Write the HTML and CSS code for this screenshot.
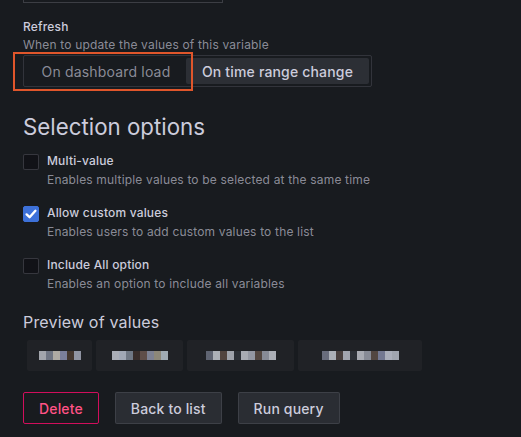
FILE: index.html
```html
<!DOCTYPE html>
<html>
<head>
<meta charset="utf-8">
<link rel="stylesheet" href="styles.css">
</head>
<body>
<div class="page">
  <div class="prev-input"></div>
  <div class="field">
    <div class="label">Refresh</div>
    <div class="desc">When to update the values of this variable</div>
    <div class="radio-wrap">
      <div class="radio-group">
        <div class="opt">On dashboard load</div>
        <div class="opt active">On time range change</div>
      </div>
      <div class="highlight"></div>
    </div>
  </div>

  <h3 class="section-title">Selection options</h3>

  <div class="check-row">
    <span class="cb"></span>
    <div class="check-text">
      <div class="check-label">Multi-value</div>
      <div class="check-desc">Enables multiple values to be selected at the same time</div>
    </div>
  </div>
  <div class="check-row">
    <span class="cb checked"><svg viewBox="0 0 16 16" width="16" height="16"><path d="M3.6 8.4 L6.6 11.2 L12.4 4.8" fill="none" stroke="#fff" stroke-width="2.4" stroke-linecap="round" stroke-linejoin="round"/></svg></span>
    <div class="check-text">
      <div class="check-label">Allow custom values</div>
      <div class="check-desc">Enables users to add custom values to the list</div>
    </div>
  </div>
  <div class="check-row">
    <span class="cb"></span>
    <div class="check-text">
      <div class="check-label">Include All option</div>
      <div class="check-desc">Enables an option to include all variables</div>
    </div>
  </div>

  <h4 class="preview-title">Preview of values</h4>
  <div class="chips">
    <div class="chip c1"><span class="blur"><i style="background:#b9bcc4"></i><i style="background:#7d8494"></i><i style="background:#c9c3bb"></i><i style="background:#8c90b0"></i><i style="background:#4a3a30"></i><i style="background:#a4a9b8"></i></span></div>
    <div class="chip c2"><span class="blur"><i style="background:#c2c6d0"></i><i style="background:#b8c0d0"></i><i style="background:#7f8796"></i><i style="background:#3d2f2c"></i><i style="background:#6b5650"></i><i style="background:#8e92a6"></i><i style="background:#a09a88"></i><i style="background:#b7c3cc"></i></span></div>
    <div class="chip c3"><span class="blur"><i style="background:#6b7080"></i><i style="background:#c6cad2"></i><i style="background:#5a4a44"></i><i style="background:#b6bac4"></i><i style="background:#2f333b"></i><i style="background:#c0c4cc"></i><i style="background:#a8acb8"></i><i style="background:#5b4d45"></i><i style="background:#9a9eaa"></i><i style="background:#c4c8d0"></i></span></div>
    <div class="chip c4"><span class="blur"><i style="background:#767b8c"></i><i style="background:#c4c8d0"></i><i style="background:#4e4340"></i><i style="background:#b9bdc6"></i><i style="background:#2f333b"></i><i style="background:#c0c4cc"></i><i style="background:#9a9eaa"></i><i style="background:#5b4d45"></i><i style="background:#8288a4"></i><i style="background:#c3c7d4"></i><i style="background:#b7bcc8"></i></span></div>
  </div>

  <div class="actions">
    <button class="btn danger">Delete</button>
    <button class="btn">Back to list</button>
    <button class="btn">Run query</button>
  </div>
</div>
</body>
</html>
```

FILE: styles.css
```css
html, body {
  margin: 0;
  padding: 0;
  background: #181b1f;
}
body {
  font-family: Inter, "Noto Sans", sans-serif;
  letter-spacing: 0.01071em;
  color: #ccccdc;
  width: 521px;
  height: 437px;
  overflow: hidden;
}
.page {
  padding-left: 23px;
}
.prev-input {
  width: 198px;
  height: 2px;
  border: 1px solid rgba(204, 204, 220, 0.2);
  border-top: none;
}
.field {
  margin-top: 15px;
}
.label {
  font-size: 12px;
  font-weight: 500;
  line-height: 18px;
  color: #ccccdc;
}
.desc {
  font-size: 12px;
  line-height: 16px;
  color: rgba(204, 204, 220, 0.65);
  margin-top: 1px;
}
.radio-wrap {
  position: relative;
  margin-top: 2px;
  width: 349px;
}
.radio-group {
  display: flex;
  padding: 2px;
  border: 1px solid rgba(204, 204, 220, 0.15);
  border-radius: 2px;
  box-sizing: content-box;
  width: 343px;
  height: 26px;
}
.opt {
  display: flex;
  align-items: center;
  justify-content: center;
  font-size: 14px;
  color: rgba(204, 204, 220, 0.65);
  border-radius: 2px;
  height: 26px;
}
.opt:first-child {
  width: 160px;
}
.opt.active {
  width: 183px;
  background: #2c2f35;
  color: #ccccdc;
  font-weight: 500;
}
.highlight {
  position: absolute;
  left: -10px;
  top: -3px;
  width: 176px;
  height: 35px;
  border: 2px solid #e0562b;
}
.section-title {
  margin: 25px 0 0 0;
  font-size: 22.3px;
  font-weight: 400;
  line-height: 30px;
  letter-spacing: 0;
  color: #ccccdc;
}
.check-row {
  display: flex;
  gap: 8px;
  margin-top: 11px;
}
.check-row + .check-row {
  margin-top: 17px;
}
.cb {
  width: 16px;
  height: 16px;
  box-sizing: border-box;
  border: 1px solid rgba(204, 204, 220, 0.2);
  border-radius: 2px;
  background: #111217;
  flex: none;
  margin-top: 1px;
  display: flex;
}
.cb.checked {
  background: #3d71d9;
  border-color: #3d71d9;
}
.cb.checked svg {
  margin: -1px;
}
.check-label {
  font-size: 12px;
  font-weight: 500;
  line-height: 16px;
  color: #ccccdc;
}
.check-desc {
  font-size: 12px;
  line-height: 16px;
  margin-top: 3px;
  color: rgba(204, 204, 220, 0.65);
}
.preview-title {
  margin: 19px 0 0 0;
  font-size: 16px;
  font-weight: 400;
  line-height: 22px;
  color: #ccccdc;
}
.chips {
  display: flex;
  gap: 4px;
  margin-top: 7px;
  padding-left: 4px;
}
.chip {
  height: 31px;
  background: #202226;
  border-radius: 2px;
  display: flex;
  align-items: center;
  justify-content: center;
}
.c1 { width: 65px; }
.c2 { width: 87px; }
.c3 { width: 107px; }
.c4 { width: 124px; }
.blur {
  display: flex;
  height: 9px;
  opacity: 0.85;
}
.blur i {
  display: block;
  width: 7px;
  height: 9px;
}
.actions {
  display: flex;
  gap: 16px;
  margin-top: 21px;
}
.btn {
  height: 32px;
  padding: 0 15px;
  font-family: Inter, "Noto Sans", sans-serif;
  letter-spacing: 0.01071em;
  font-size: 14px;
  font-weight: 500;
  color: #ccccdc;
  background: #2a2d33;
  border: 1px solid rgba(204, 204, 220, 0.12);
  border-radius: 2px;
}
.btn.danger {
  background: transparent;
  color: #ff5286;
  border-color: #d10e5c;
}
```
